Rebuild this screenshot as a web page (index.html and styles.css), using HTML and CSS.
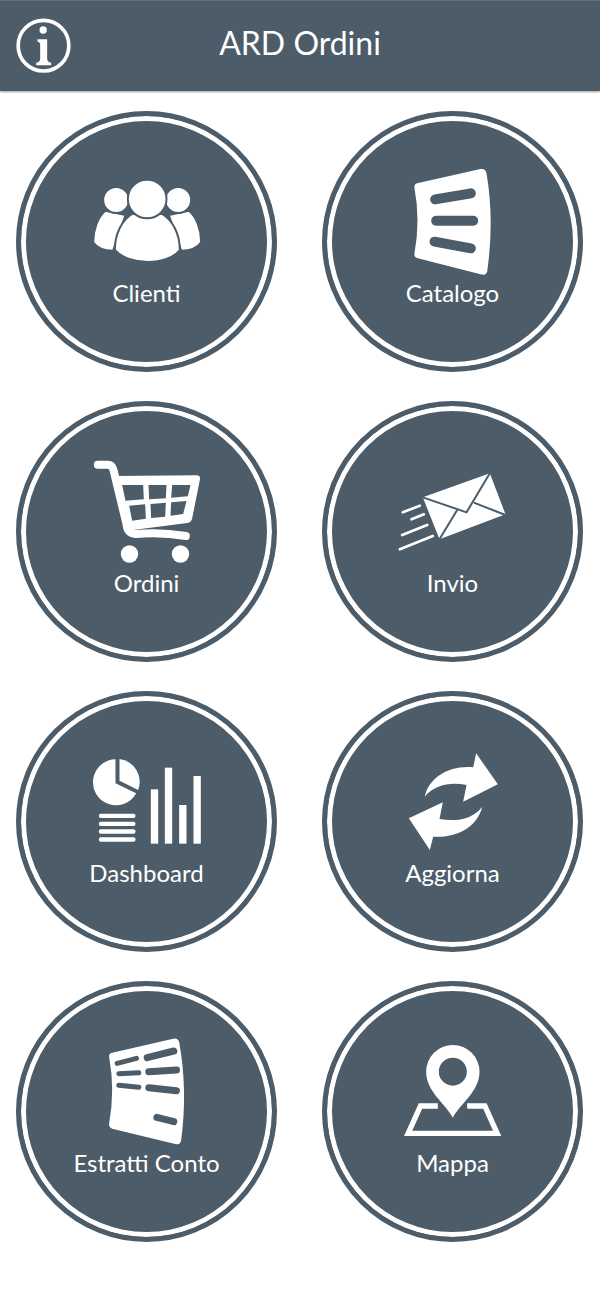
FILE: index.html
```html
<!DOCTYPE html>
<html lang="en">
<head>
    <meta charset="UTF-8">
    <meta name="viewport" content="width=device-width, initial-scale=1.0">
    <title>ARD Ordini</title>
    <link rel="stylesheet" href="styles.css">
</head>
<body>
    <header class="topbar">
        <svg class="info-icon" viewBox="0 0 260 273">
            <circle cx="130" cy="137" r="76" fill="none" stroke="#fff" stroke-width="11"/>
            <circle cx="129" cy="90" r="11" fill="#fff"/>
            <path fill="#fff" d="M112 118H141V176Q141 186 153 188V196H108V188Q120 186 120 176V134Q120 126 112 125Z"/>
        </svg>
        <h1 class="title">ARD Ordini</h1>
    </header>

    <main class="menu">
        <a class="tile">
            <svg class="tile-icon" viewBox="-10.5 -27 420 345">
                <g fill="#fff" stroke="#4d5c69" stroke-width="6">
                    <path d="M38 217C38 180 52 140 75 122L135 135 98 242C70 242 48 232 38 217Z"/>
                    <path d="M362 217C362 180 348 140 325 122L265 135 302 242C330 242 352 232 362 217Z"/>
                    <circle cx="107" cy="90" r="39"/>
                    <circle cx="293" cy="90" r="39"/>
                    <path d="M103 240C103 190 125 150 155 132H245C275 150 298 190 298 240 260 288 145 288 103 240Z"/>
                    <circle cx="200" cy="87" r="58"/>
                </g>
            </svg>
            <span class="tile-label">Clienti</span>
        </a>
        <a class="tile">
            <svg class="tile-icon" viewBox="-22.5 3 420 345">
                <path fill="#fff" d="M80 70L270 27Q285 25 288 40 312 180 290 335 285 348 270 343L82 295Q70 292 72 280 90 180 72 85 70 72 80 70Z"/>
                <g stroke="#4d5c69" stroke-width="30" stroke-linecap="round">
                    <path d="M134 118L241 100"/>
                    <path d="M137 182H248"/>
                    <path d="M132 245L241 265"/>
                </g>
            </svg>
            <span class="tile-label">Catalogo</span>
        </a>
        <a class="tile">
            <svg class="tile-icon" viewBox="-10.5 3 420 345">
                <path fill="none" stroke="#fff" stroke-width="24" stroke-linecap="round" stroke-linejoin="round" d="M52 44H82Q95 44 99 60L138 222Q140 250 165 252 240 245 316 258"/>
                <path fill="#fff" fill-rule="evenodd" d="M105 78L350 76Q361 78 358 90L335 205Q333 217 320 219L140 242ZM125 105L135 152 190 148 188 105ZM204 105L206 148 256 145 258 105ZM275 105L272 143 322 139 330 105ZM146 167L155 212 196 206 194 163ZM210 162L212 204 254 200 256 158ZM272 157L270 197 308 192 318 153Z"/>
                <circle cx="147" cy="312" r="26" fill="#fff"/>
                <circle cx="300" cy="312" r="26" fill="#fff"/>
            </svg>
            <span class="tile-label">Ordini</span>
        </a>
        <a class="tile">
            <svg class="tile-icon" viewBox="-22.5 -27 420 345">
                <path fill="#fff" d="M97 112L298 40 345 163 147 238Z"/>
                <path fill="none" stroke="#4d5c69" stroke-width="6" d="M97 112L228 157 298 40M147 238L200 150M250 128L345 165"/>
                <path stroke="#fff" stroke-width="8" stroke-linecap="round" d="M37 157L88 137M63 178L100 163M35 225L110 195M28 268L127 228"/>
            </svg>
            <span class="tile-label">Invio</span>
        </a>
        <a class="tile">
            <svg class="tile-icon" viewBox="-10.5 -27 420 345">
                <g fill="#fff">
                    <path d="M105 28V100L167 130A69 69 0 1 1 105 28Z"/>
                    <path d="M117 27A69 69 0 0 1 173 120L117 92Z"/>
                    <rect x="55" y="191" width="110" height="13" rx="6"/>
                    <rect x="55" y="215" width="110" height="13" rx="6"/>
                    <rect x="55" y="238" width="110" height="13" rx="6"/>
                    <rect x="55" y="262" width="110" height="13" rx="6"/>
                    <rect x="211" y="118" width="22" height="163"/>
                    <rect x="253" y="53" width="22" height="228"/>
                    <rect x="296" y="165" width="22" height="116"/>
                    <rect x="339" y="78" width="22" height="203"/>
                </g>
            </svg>
            <span class="tile-label">Dashboard</span>
        </a>
        <a class="tile">
            <svg class="tile-icon" viewBox="-22.5 3 420 345">
                <g fill="#fff">
                    <path d="M103 170C115 110 180 75 248 82L257 40 322 133 218 185 228 135C180 125 130 135 103 170Z"/>
                    <path d="M55 235L157 187 147 237C195 245 245 240 275 200 260 265 190 295 128 290L118 330Z"/>
                </g>
            </svg>
            <span class="tile-label">Aggiorna</span>
        </a>
        <a class="tile">
            <svg class="tile-icon" viewBox="-40.5 3 420 345">
                <path fill="#fff" d="M65 68L248 26Q262 23 266 36 292 180 272 330 270 346 254 342L65 296Q54 292 56 280 74 180 56 82 54 70 65 68Z"/>
                <g stroke="#4d5c69" stroke-linecap="round">
                    <path stroke-width="15" d="M80 100L138 85M85 131L145 128M85 166L145 172"/>
                    <path stroke-width="21" d="M170 83L250 63M175 125L258 120M175 173L258 182M199 262L250 275"/>
                </g>
            </svg>
            <span class="tile-label">Estratti Conto</span>
        </a>
        <a class="tile">
            <svg class="tile-icon" viewBox="-37.5 -12 420 345">
                <path fill="none" stroke="#fff" stroke-width="16" d="M127 213H75L38 295H305L268 213H215"/>
                <path fill="#fff" fill-rule="evenodd" d="M172 248C150 205 92 170 92 110A80 80 0 0 1 252 110C252 170 194 205 172 248ZM172 68A42 42 0 1 0 172 152 42 42 0 1 0 172 68Z"/>
            </svg>
            <span class="tile-label">Mappa</span>
        </a>
    </main>
</body>
</html>
```

FILE: styles.css
```css
body {
    margin: 0;
    background: #fff;
    font-family: Lato, "Open Sans", sans-serif;
    color: #fff;
}
.topbar {
    height: 91px;
    background: #4d5c69;
    box-shadow: inset 0 1px 0 rgba(255, 255, 255, 0.12), 0 1px 2px rgba(0, 0, 0, 0.4);
    display: flex;
    align-items: center;
    justify-content: center;
    position: relative;
}
.info-icon {
    position: absolute;
    left: 0;
    top: 0;
    width: 87px;
    height: 91px;
}
.title {
    margin: 0 0 6px;
    font-size: 32px;
    font-weight: 400;
}
.menu {
    display: grid;
    grid-template-columns: 261px 261px;
    column-gap: 45px;
    row-gap: 29px;
    padding: 20px 17px 0 16px;
}
.tile {
    box-sizing: border-box;
    height: 261px;
    border: 5px solid #4d5c69;
    border-radius: 50%;
    background: #4d5c69;
    box-shadow: inset 0 0 0 5px #fff;
    padding-top: 45px;
    display: flex;
    flex-direction: column;
    align-items: center;
}
.tile-icon {
    display: block;
    width: 140px;
    height: 115px;
    overflow: visible;
}
.tile-label {
    margin-top: 2px;
    font-size: 24px;
    line-height: 30px;
}
```
